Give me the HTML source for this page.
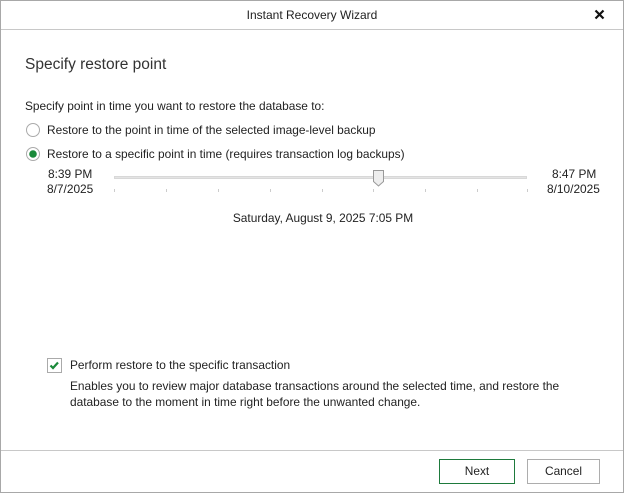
<!DOCTYPE html>
<html><head><style>
body{margin:0;width:624px;height:493px;background:#fff;font-family:"Liberation Sans",sans-serif;color:#222;position:relative;overflow:hidden}
.win{position:absolute;left:0;top:0;width:622px;height:491px;border:1px solid #a8a8a8}
.t{position:absolute;white-space:nowrap;font-size:11.9px}
.line{position:absolute;left:0;width:622px;height:1px;background:#c8c8c8}
.btn{position:absolute;top:459px;height:23px;border:1px solid #adadad;background:#fff;font-size:11.9px;text-align:center;line-height:23px}
.tick{position:absolute;top:189px;width:1px;height:3px;background:#ccc}
</style></head><body>
<div class="win"></div>
<div class="t" style="left:0;width:624px;text-align:center;top:8px;font-size:12px">Instant Recovery Wizard</div>
<svg style="position:absolute;left:594px;top:9px" width="11" height="11"><path d="M1.5 1.5L9.5 9.5M9.5 1.5L1.5 9.5" stroke="#111" stroke-width="2.2"/></svg>
<div class="line" style="top:29px;left:1px"></div>
<div class="t" style="left:25px;top:56px;font-size:15.5px;color:#333">Specify restore point</div>
<div class="t" style="left:25px;top:99px">Specify point in time you want to restore the database to:</div>
<svg style="position:absolute;left:25px;top:122px" width="16" height="16"><circle cx="8" cy="8" r="6.5" fill="#fff" stroke="#aaa"/></svg>
<div class="t" style="left:47px;top:123px">Restore to the point in time of the selected image-level backup</div>
<svg style="position:absolute;left:25px;top:146px" width="16" height="16"><circle cx="8" cy="8" r="6.5" fill="#fff" stroke="#aaa"/><circle cx="8" cy="8" r="3.8" fill="#1a8a3a"/></svg>
<div class="t" style="left:47px;top:147px">Restore to a specific point in time (requires transaction log backups)</div>
<div class="t" style="left:48px;top:167px">8:39 PM</div>
<div class="t" style="left:47px;top:182px">8/7/2025</div>
<div class="t" style="left:552px;top:167px">8:47 PM</div>
<div class="t" style="left:547px;top:182px">8/10/2025</div>
<div style="position:absolute;left:114px;top:176px;width:413px;height:3px;background:#e4e4e4;border:1px solid #d8d8d8;box-sizing:border-box"></div>
<svg style="position:absolute;left:372px;top:169px" width="14" height="19"><path d="M1.5 1.5H11.5V12.5L6.5 17L1.5 12.5Z" fill="#eee" stroke="#999"/></svg>
<div class="tick" style="left:114px"></div><div class="tick" style="left:166px"></div><div class="tick" style="left:218px"></div><div class="tick" style="left:270px"></div><div class="tick" style="left:322px"></div><div class="tick" style="left:373px"></div><div class="tick" style="left:425px"></div><div class="tick" style="left:477px"></div><div class="tick" style="left:527px"></div>
<div class="t" style="left:0;width:646px;text-align:center;top:211px">Saturday, August 9, 2025 7:05 PM</div>
<svg style="position:absolute;left:47px;top:358px" width="15" height="15"><rect x="0.5" y="0.5" width="14" height="14" fill="#fff" stroke="#aaa"/><path d="M3.5 7.5L6 10L11 4.5" stroke="#1a8a3a" stroke-width="2.2" fill="none"/></svg>
<div class="t" style="left:70px;top:358px">Perform restore to the specific transaction</div>
<div class="t" style="left:70px;top:379px">Enables you to review major database transactions around the selected time, and restore the</div>
<div class="t" style="left:70px;top:395px">database to the moment in time right before the unwanted change.</div>
<div class="line" style="top:450px;left:1px"></div>
<div class="btn" style="left:439px;width:74px;border-color:#1e7a3c">Next</div>
<div class="btn" style="left:527px;width:71px">Cancel</div>
</body></html>
